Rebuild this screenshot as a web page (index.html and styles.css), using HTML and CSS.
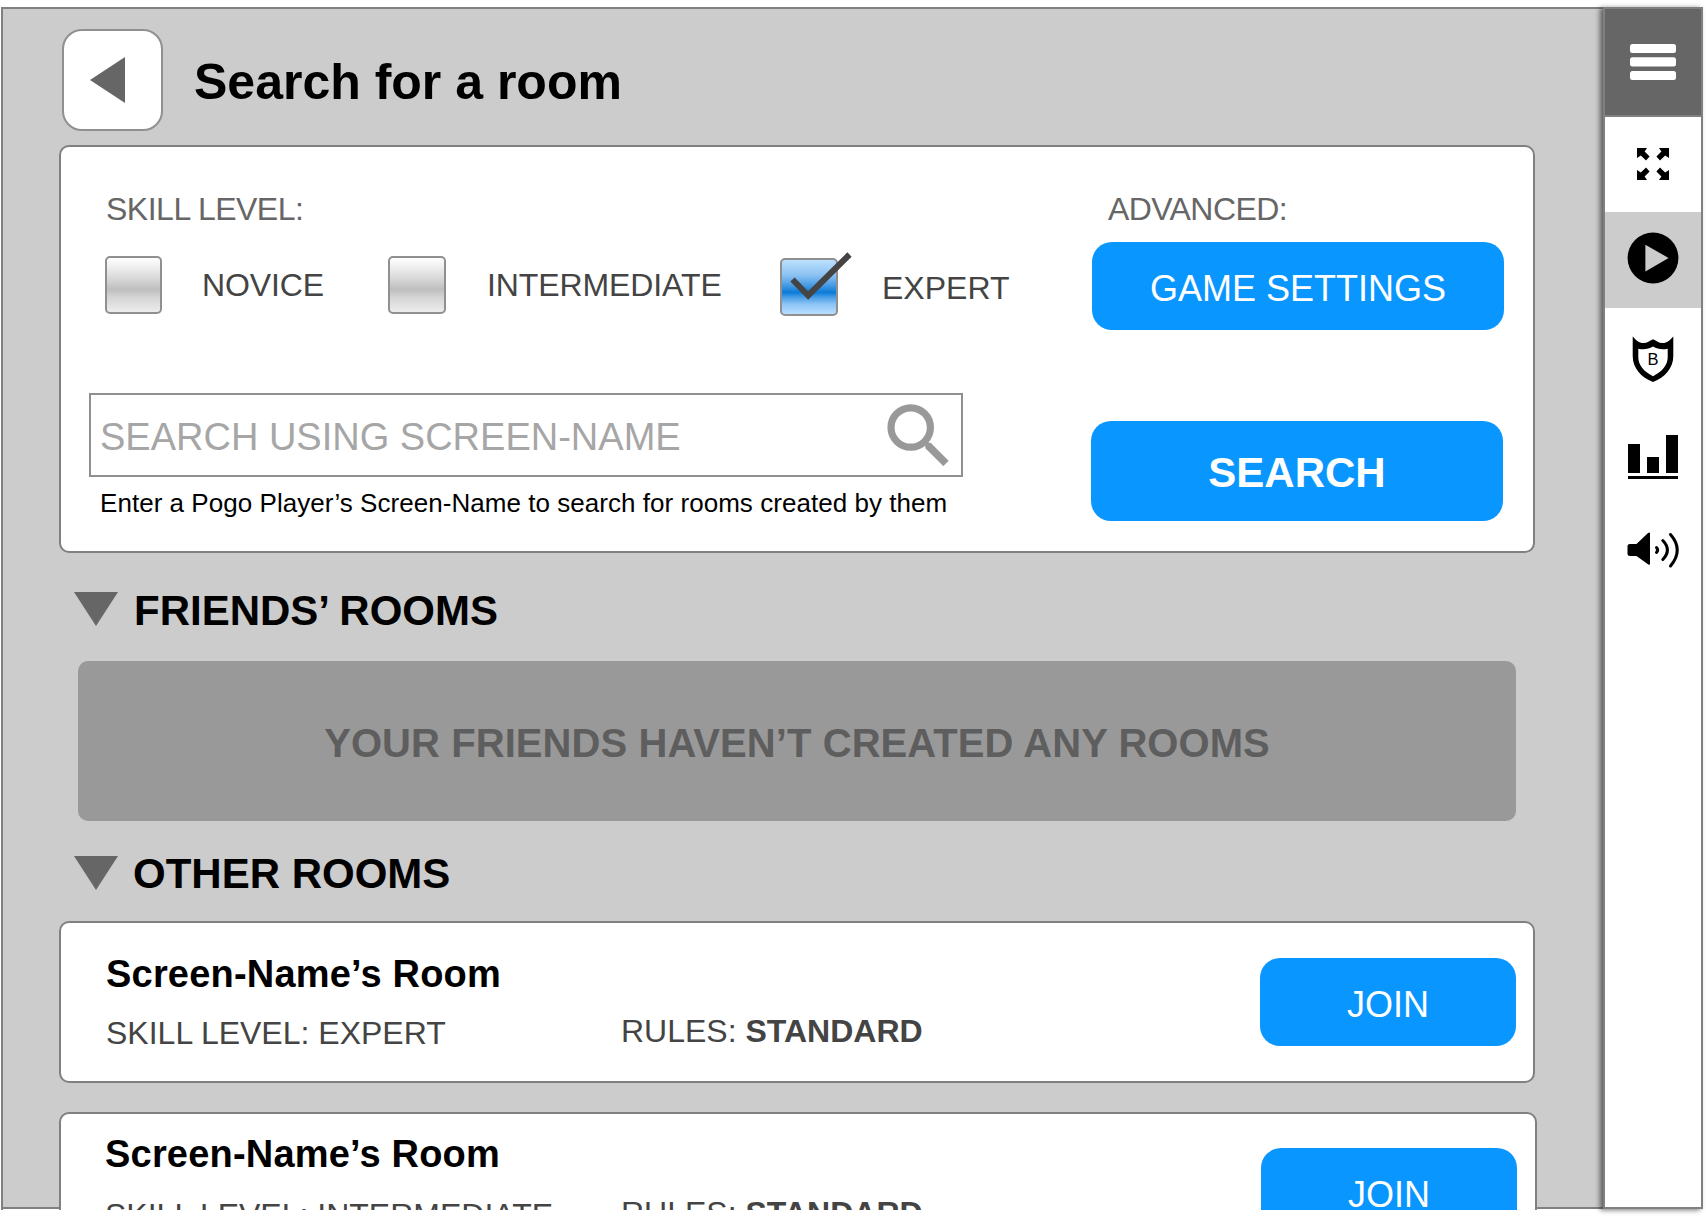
FILE: index.html
```html
<!DOCTYPE html>
<html lang="en">
<head>
<meta charset="utf-8">
<title>Search for a room</title>
<link rel="stylesheet" href="styles.css">
</head>
<body>
<div class="app">
  <main class="main">
    <header class="header">
      <button class="back" aria-label="Back"><svg width="36" height="46" viewBox="0 0 36 46"><path d="M0 23L35 0V46Z" fill="#666"/></svg></button>
      <h1 class="title">Search for a room</h1>
    </header>

    <section class="panel search-panel">
      <div class="filters">
        <div class="label skill-label">SKILL LEVEL:</div>
        <div class="options">
          <div class="option"><span class="box"></span><span class="option-name novice">NOVICE</span></div>
          <div class="option"><span class="box"></span><span class="option-name intermediate">INTERMEDIATE</span></div>
          <div class="option expert"><span class="box checked"><svg class="tick" width="64" height="54" viewBox="0 0 64 54"><path d="M12.500 24.500L28.200 40.500L69.500 -0.500" fill="none" stroke="#444" stroke-width="6"/></svg></span><span class="option-name">EXPERT</span></div>
        </div>
        <div class="field">
          <span class="placeholder">SEARCH USING SCREEN-NAME</span>
          <svg class="magnifier" width="62" height="62" viewBox="0 0 62 62"><g fill="none" stroke="#999"><circle cx="23.700" cy="23.500" r="19.700" stroke-width="7.200"/><path d="M41 41.500L59 59.500" stroke-width="7.500"/></g><circle cx="41.500" cy="42" r="3.400" fill="#999"/></svg>
        </div>
        <p class="hint">Enter a Pogo Player’s Screen-Name to search for rooms created by them</p>
      </div>
      <div class="actions">
        <div class="label advanced-label">ADVANCED:</div>
        <button class="button settings">GAME SETTINGS</button>
        <button class="button search">SEARCH</button>
      </div>
    </section>

    <h2 class="section friends"><svg class="arrow" width="44" height="34" viewBox="0 0 44 34"><path d="M0 0H44L22 34Z" fill="#666"/></svg>FRIENDS’ ROOMS</h2>
    <div class="empty"><span>YOUR FRIENDS HAVEN’T CREATED ANY ROOMS</span></div>

    <h2 class="section others"><svg class="arrow" width="44" height="34" viewBox="0 0 44 34"><path d="M0 0H44L22 34Z" fill="#666"/></svg>OTHER ROOMS</h2>
    <article class="panel room">
      <div class="info">
        <h3 class="room-name">Screen-Name’s Room</h3>
        <div class="room-skill">SKILL LEVEL: EXPERT</div>
      </div>
      <div class="rules">RULES: <b>STANDARD</b></div>
      <button class="button join">JOIN</button>
    </article>
    <article class="panel room room-second">
      <div class="info">
        <h3 class="room-name">Screen-Name’s Room</h3>
        <div class="room-skill">SKILL LEVEL: INTERMEDIATE</div>
      </div>
      <div class="rules">RULES: <b>STANDARD</b></div>
      <button class="button join">JOIN</button>
    </article>
  </main>

  <nav class="sidebar">
    <div class="cell menu"><svg width="96" height="106" viewBox="0 0 96 106"><g fill="#fff"><rect x="25" y="35" width="46" height="9" rx="2.500"/><rect x="25" y="48.200" width="46" height="9.300" rx="2.500"/><rect x="25" y="62" width="46" height="9" rx="2.500"/></g></svg></div>
    <div class="cell"><svg width="96" height="95" viewBox="0 0 96 95"><defs><path id="corner" d="M0 0H10L7.600 3.600L12.600 8.600L9 12.600L3.800 7.400L0 10Z"/></defs><use href="#corner" transform="translate(32 31)"/><use href="#corner" transform="translate(64 31) scale(-1 1)"/><use href="#corner" transform="translate(32 63) scale(1 -1)"/><use href="#corner" transform="translate(64 63) scale(-1 -1)"/></svg></div>
    <div class="cell active"><svg width="96" height="96" viewBox="0 0 96 96"><circle cx="48" cy="46" r="25.400"/><path d="M40.400 32.800L63.600 46L40.400 59.400Z" fill="#ccc"/></svg></div>
    <div class="cell"><svg width="96" height="96" viewBox="0 0 96 96"><path fill-rule="evenodd" d="M27.700 28.500C30.500 31.500 33 34.500 37.500 35C42 35.500 44 33 48 31.200C52 33 54 35.500 58.500 35C63 34.500 65.500 31.500 68.300 28.500V48C68.300 60 60 69.500 48 74C36 69.500 27.700 60 27.700 48ZM33.300 40.800V49C33.300 57 38.500 63.500 48 68.200C57.500 63.500 62.700 57 62.700 49V40.800C56.500 42 52.500 41 48 38.500C43.500 41 39.500 42 33.300 40.800Z"/><text class="shield-letter" x="48" y="57" text-anchor="middle">B</text></svg></div>
    <div class="cell"><svg width="96" height="96" viewBox="0 0 96 96"><path d="M23 40H35V69H23ZM42 53H54V69H42ZM61 31H73V69H61ZM23 72H73V75H23Z"/></svg></div>
    <div class="cell"><svg width="96" height="96" viewBox="0 0 96 96"><path d="M25 44H31.500L43 33Q45 31.800 45 33.500V63.500Q45 65.500 43 64.200L31.500 56H25Q22.500 56 22.500 54V46Q22.500 44 25 44Z"/><g fill="none" stroke="#000" stroke-width="3" stroke-linecap="round"><path d="M51.500 47.500Q53.800 50 51.500 52.500"/><path d="M57.800 40.500Q67 50 57.800 59.500"/><path d="M65.500 34.500Q79 50 65.500 66"/></g></svg></div>
  </nav>
</div>
</body>
</html>
```
FILE: styles.css
```css
* {
  box-sizing: border-box;
  margin: 0;
  padding: 0;
}

body {
  background: #fff;
  color: #000;
  font-family: "Liberation Sans", Arial, Helvetica, sans-serif;
  line-height: 1;
  overflow: hidden;
}

svg {
  display: block;
}

button {
  border: 0;
  font-family: inherit;
  line-height: 1;
}

.app {
  display: flex;
  align-items: flex-start;
  padding: 7px 0 0 1px;
  height: 1216px;
  overflow: hidden;
}

.main {
  flex: 0 0 1602px;
  height: 1203px;
  overflow: hidden;
  border: solid #808080;
  border-width: 2px 0 0 2px;
  background: linear-gradient(#ccc 1198px, #808080 1198px, #808080 1200px, #fff 1200px);
}

.header {
  display: flex;
  align-items: flex-start;
  gap: 31px;
  padding: 20px 0 0 59px;
}

.back {
  display: flex;
  align-items: center;
  width: 101px;
  height: 102px;
  padding-left: 26px;
  border: 2px solid #909090;
  border-radius: 20px;
  background: #fff;
}

.title {
  margin-top: 28px;
  font-size: 50px;
  white-space: nowrap;
}

.panel {
  display: flex;
  align-items: flex-start;
  width: 1476px;
  margin-left: 56px;
  border: 2px solid #808080;
  border-radius: 10px;
  background: #fff;
  white-space: nowrap;
}

.search-panel {
  height: 408px;
  margin-top: 14px;
}

.filters {
  flex: 0 0 1030px;
  padding-top: 46px;
}

.label {
  color: #666;
  font-size: 32px;
}

.skill-label {
  margin-left: 45px;
  letter-spacing: -0.5px;
}

.options {
  display: grid;
  grid-template-columns: 283px 392px 1fr;
  margin: 31px 0 0 44px;
  height: 60px;
}

.option {
  display: flex;
  align-items: flex-start;
  gap: 40px;
}

.expert {
  gap: 44px;
  margin-top: 2px;
}

.box {
  position: relative;
  flex: none;
  width: 58px;
  height: 58px;
  border: 2px solid #909090;
  border-radius: 5px;
  background: linear-gradient(#fff, #dcdcdc 35%, #bebebe 58%, #d6d6d6 74%, #ececec);
}

.option:first-child .box {
  width: 57px;
}

.checked {
  background: linear-gradient(#bce1ff, #8cc2f2 28%, #4398e2 48%, #0a7cd8 60%, #4fa0e6 70%, #8ec5f6 82%, #b8deff);
}

.tick {
  position: absolute;
  left: -2px;
  top: -5px;
  overflow: visible;
}

.option-name {
  margin-top: 13px;
  color: #444;
  font-size: 32px;
}

.expert .option-name {
  margin-top: 14px;
}

.intermediate {
  margin-left: 1px;
  letter-spacing: -0.1px;
}

.novice {
  letter-spacing: -0.1px;
}

.field {
  display: flex;
  align-items: flex-start;
  justify-content: space-between;
  width: 874px;
  height: 84px;
  margin: 77px 0 0 28px;
  padding: 0 12px 0 9px;
  border: 2px solid #909090;
}

.placeholder {
  margin-top: 23px;
  color: #a6a6a6;
  font-size: 38px;
}

.magnifier {
  margin-top: 8.5px;
}

.hint {
  margin: 13px 0 0 39px;
  font-size: 26px;
  letter-spacing: 0.04px;
}

.actions {
  padding-top: 46px;
}

.advanced-label {
  margin-left: 17px;
  letter-spacing: -0.6px;
}

.button {
  display: flex;
  align-items: center;
  justify-content: center;
  width: 412px;
  height: 88px;
  padding-top: 5px;
  border-radius: 20px;
  background: #0a96ff;
  color: #fff;
  font-size: 36px;
}

.settings {
  margin: 17px 0 0 1px;
}

.search {
  height: 100px;
  margin-top: 91px;
  padding-top: 3px;
  font-size: 42px;
  font-weight: bold;
}

.section {
  display: flex;
  align-items: flex-start;
  margin-left: 71px;
  font-size: 42px;
}

.friends {
  gap: 16px;
  margin: 37px 0 29px 71px;
}

.others {
  gap: 15px;
  margin: 32px 0 26px 71px;
}

.arrow {
  margin-top: 2px;
}

.others .arrow {
  margin-top: 3px;
}

.empty {
  display: flex;
  align-items: center;
  justify-content: center;
  width: 1438px;
  height: 160px;
  margin-left: 75px;
  padding-top: 4px;
  border-radius: 10px;
  background: #999;
  color: #5e5e5e;
  font-size: 40px;
  font-weight: bold;
  letter-spacing: 0.07px;
}

.room {
  height: 162px;
}

.info {
  flex: 0 0 560px;
  padding: 32px 0 0 45px;
}

.room-name {
  font-size: 38px;
  letter-spacing: 0.2px;
}

.room-skill {
  margin-top: 24px;
  color: #444;
  font-size: 32px;
}

.rules {
  margin-top: 92px;
  color: #444;
  font-size: 32px;
}

.join {
  width: 256px;
  margin: 35px 17px 0 auto;
}

.room-second {
  width: 1478px;
  margin-top: 29px;
}

.room-second .info {
  padding: 21px 0 0 44px;
}

.room-second .room-skill {
  margin-top: 26px;
}

.room-second .rules {
  margin-top: 83px;
}

.room-second .join {
  margin: 34px 18px 0 auto;
  padding-top: 6px;
}

.sidebar {
  flex: 0 0 100px;
  height: 1202px;
  border: 2px solid #808080;
  background: #fff;
  box-shadow: -3px 1px 5px rgba(0, 0, 0, 0.55);
}

.menu {
  border-bottom: 2px solid #808080;
  background: #666;
}

.active {
  background: #ccc;
}

.shield-letter {
  font-size: 16.5px;
}
```
